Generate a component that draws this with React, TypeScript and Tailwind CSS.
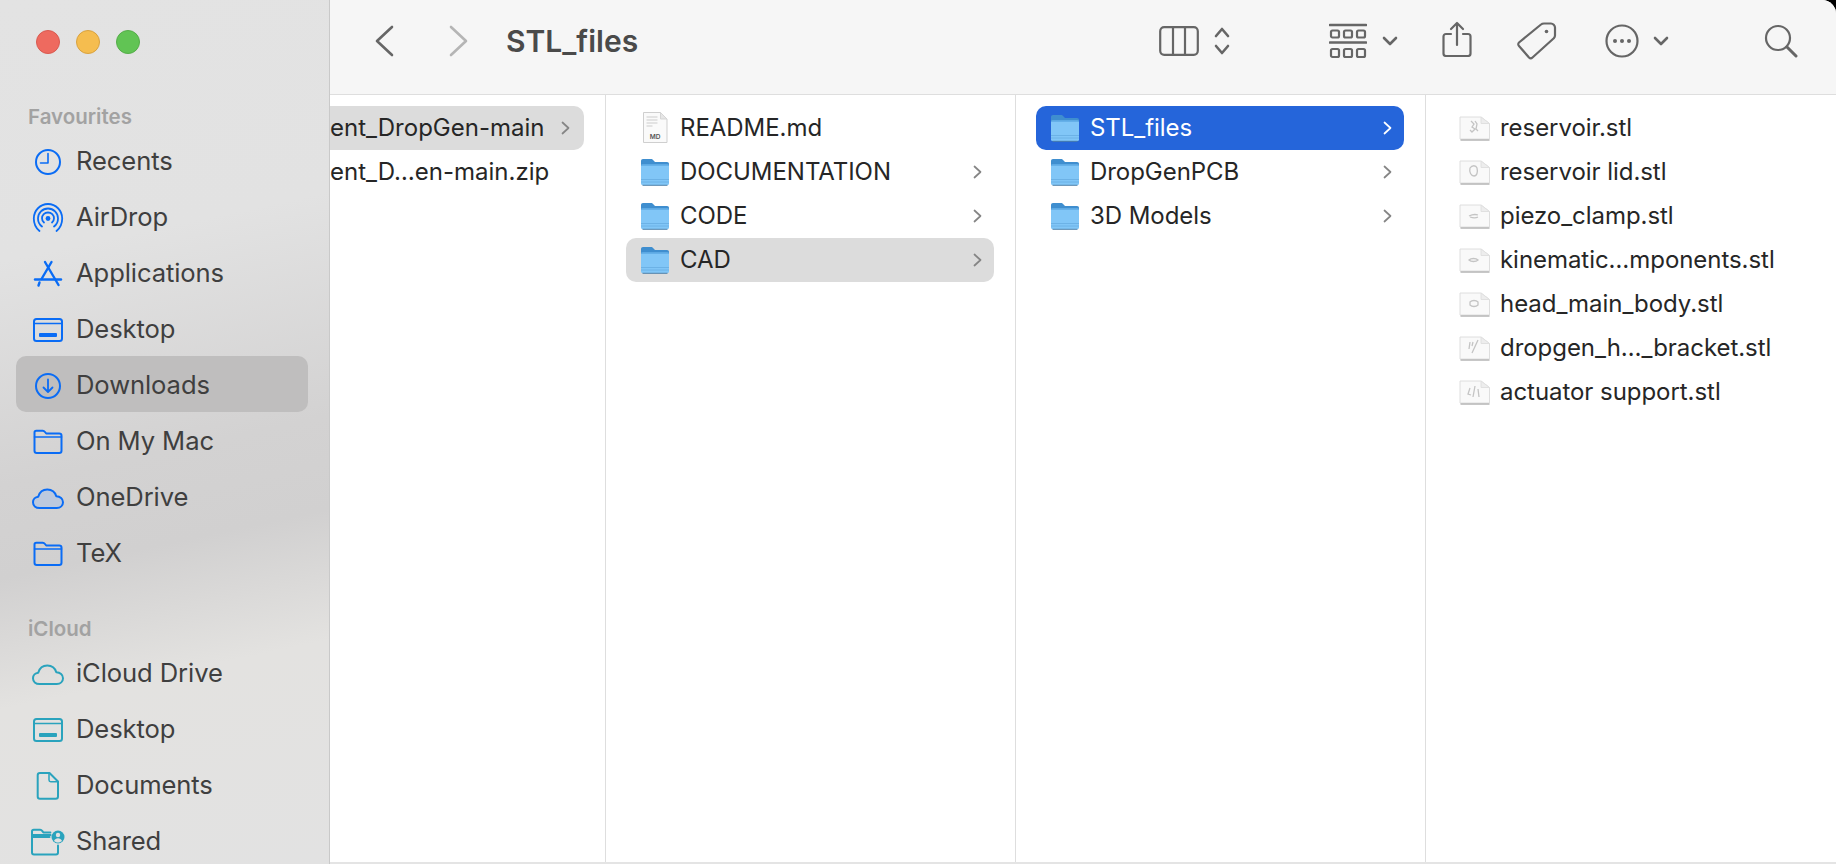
import type { ReactNode } from "react";

const BLUE = "#0a6cf5";
const TEAL = "#2aa3bd";

function SideIcon({ children }: { children: ReactNode }) {
  return (
    <svg width="36" height="36" viewBox="0 0 36 36" fill="none" strokeWidth="2" strokeLinecap="round" strokeLinejoin="round" className="shrink-0">
      {children}
    </svg>
  );
}

function ClockIcon() {
  return (
    <SideIcon>
      <g stroke={BLUE}>
        <circle cx="18" cy="18" r="12" />
        <path d="M18 9.500V19H10.500" strokeWidth="1.600" />
      </g>
    </SideIcon>
  );
}

function AirDropIcon() {
  return (
    <SideIcon>
      <g stroke={BLUE} strokeWidth="1.800">
        <path d="M9.500 31C5.800 28 3.800 23.500 3.800 18.500 3.800 10.500 10.200 4 18 4s14.200 6.500 14.200 14.500c0 5-2 9.500-5.700 12.500" />
        <path d="M12 26.500C9.500 24.700 8 21.800 8 18.500 8 12.900 12.500 8.500 18 8.500s10 4.400 10 10c0 3.300-1.500 6.200-4 8" />
        <path d="M14 22.500c-1.300-1-2-2.500-2-4.200 0-3.300 2.700-5.800 6-5.800s6 2.500 6 5.800c0 1.700-.7 3.200-2 4.200" />
      </g>
      <circle cx="18" cy="18.500" r="2.400" fill={BLUE} />
    </SideIcon>
  );
}

function AppsIcon() {
  return (
    <SideIcon>
      <g stroke={BLUE} strokeWidth="2.400">
        <path d="M15 6l13.500 23" />
        <path d="M21.500 6L11.500 23" />
        <path d="M5 23.500h26" />
        <path d="M9.500 26.500l-1 3" />
      </g>
    </SideIcon>
  );
}

function DesktopIcon({ color }: { color: string }) {
  return (
    <SideIcon>
      <rect x="4" y="7" width="28" height="22" rx="2.500" stroke={color} />
      <path d="M4 11.500h28" stroke={color} strokeWidth="1.500" />
      <rect x="9" y="21" width="18" height="4" rx="1" fill={color} />
    </SideIcon>
  );
}

function DownloadIcon() {
  return (
    <SideIcon>
      <g stroke={BLUE}>
        <circle cx="18" cy="18" r="12" />
        <path d="M18 11.500v12M13.500 19.500l4.500 4.500 4.500-4.500" strokeWidth="1.800" />
      </g>
    </SideIcon>
  );
}

function FolderLine({ color }: { color: string }) {
  return (
    <SideIcon>
      <path d="M4.500 8.500c0-1 .7-1.800 1.800-1.800h6.500c1 0 1.500.4 2.200 1.300l1.200 1.500h13c1.300 0 2.300 1 2.300 2.200v15c0 1.300-1 2.300-2.300 2.300H6.800c-1.300 0-2.300-1-2.300-2.300z" stroke={color} />
      <path d="M4.500 13h27" stroke={color} strokeWidth="1.500" />
    </SideIcon>
  );
}

function CloudIcon({ color, fill }: { color: string; fill?: boolean }) {
  const outline =
    "M9.500 28C5.700 28 3 25.600 3 22.300c0-3 2.300-5.300 5.200-5.600C9.500 12.300 13 9.500 17.300 9.500c4.300 0 7.800 2.700 9 6.800 3.900.1 6.700 2.700 6.700 6 0 3.300-2.600 5.700-6.200 5.700z";
  return (
    <SideIcon>
      {fill && <path d={outline} fill="#bcc9de" />}
      <path d={outline} stroke={color} />
    </SideIcon>
  );
}

function DocLineIcon() {
  return (
    <SideIcon>
      <path d="M10 5.500h9.500L28 14v15c0 1.300-1 2.300-2.300 2.300H10c-1.300 0-2.300-1-2.300-2.300V7.800C7.700 6.500 8.700 5.500 10 5.500z" stroke={TEAL} transform="translate(0 -.5)" />
      <path d="M19 5v7c0 1 .7 1.700 1.700 1.700H28" stroke={TEAL} strokeWidth="1.500" />
    </SideIcon>
  );
}

function SharedIcon() {
  return (
    <SideIcon>
      <path d="M21 11.500H2.500V29c0 1.300.8 2 2 2h22c1.200 0 2-.8 2-2v-7M2.500 11.500V8c0-1 .7-1.700 1.700-1.700h6.500c1 0 1.500.4 2.200 1.300l1 1.400h7M2.500 13.500H20" stroke={TEAL} transform="translate(-.5 -.5)" />
      <circle cx="28" cy="13" r="6.500" fill={TEAL} />
      <circle cx="28" cy="11" r="2.200" fill="#e1e1e1" />
      <path d="M24 17c.8-2 2.300-2.800 4-2.800s3.200.8 4 2.800c-1 .9-2.400 1.500-4 1.500S25 17.900 24 17z" fill="#e1e1e1" />
    </SideIcon>
  );
}

function SideRow({ icon, label, active }: { icon: ReactNode; label: string; active?: boolean }) {
  return (
    <div className={`flex h-14 shrink-0 items-center gap-[10px] rounded-[10px] pt-[3px] pl-3.5 ${active ? "bg-[#bfbebe]" : ""}`}>
      {icon}
      <span className="text-[25.600px] tracking-[-0.1px] text-[#3f3f3f]">{label}</span>
    </div>
  );
}

function SideHeading({ children, className }: { children: string; className: string }) {
  return <div className={`pl-3 text-[20.500px] leading-[31px] font-semibold text-[#a2a2a2] ${className}`}>{children}</div>;
}

function Sidebar() {
  return (
    <aside className="flex h-full w-[330px] shrink-0 flex-col overflow-hidden border-r border-[#c9c9c9] bg-[linear-gradient(168deg,#e3e3e3_0%,#e2e2e2_28%,#d3d2d2_52%,#d1d0d0_62%,#e3e2e0_76%,#e2e2e2_100%)] pr-[21px] pl-4">
      <div className="flex h-[84px] shrink-0 items-center gap-4 pl-5">
        <span className="size-6 rounded-full border border-[#d95a50] bg-[#ee6a5f]" />
        <span className="size-6 rounded-full border border-[#d9a23f] bg-[#f5bd4f]" />
        <span className="size-6 rounded-full border border-[#55ad49] bg-[#61c454]" />
      </div>
      <SideHeading className="mt-[17px] shrink-0">Favourites</SideHeading>
      <SideRow icon={<ClockIcon />} label="Recents" />
      <SideRow icon={<AirDropIcon />} label="AirDrop" />
      <SideRow icon={<AppsIcon />} label="Applications" />
      <SideRow icon={<DesktopIcon color={BLUE} />} label="Desktop" />
      <SideRow icon={<DownloadIcon />} label="Downloads" active />
      <SideRow icon={<FolderLine color={BLUE} />} label="On My Mac" />
      <SideRow icon={<CloudIcon color={BLUE} fill />} label="OneDrive" />
      <SideRow icon={<FolderLine color={BLUE} />} label="TeX" />
      <SideHeading className="mt-[33px] shrink-0">iCloud</SideHeading>
      <SideRow icon={<CloudIcon color={TEAL} />} label="iCloud Drive" />
      <SideRow icon={<DesktopIcon color={TEAL} />} label="Desktop" />
      <SideRow icon={<DocLineIcon />} label="Documents" />
      <SideRow icon={<SharedIcon />} label="Shared" />
    </aside>
  );
}

function ToolSvg({ w, h, children, className }: { w: number; h: number; children: ReactNode; className?: string }) {
  return (
    <svg width={w} height={h} viewBox={`0 0 ${w} ${h}`} fill="none" stroke="#666" strokeWidth="2.200" strokeLinecap="round" strokeLinejoin="round" className={`shrink-0 ${className ?? ""}`}>
      {children}
    </svg>
  );
}

function SmallChevronDown({ className }: { className: string }) {
  return (
    <ToolSvg w={16} h={10} className={className}>
      <path d="M2 2l6 6 6-6" strokeWidth="2.600" />
    </ToolSvg>
  );
}

function Toolbar() {
  return (
    <header className="flex h-[95px] shrink-0 items-center border-b border-[#dedede] bg-[#f6f6f6] pb-[13px]">
      <ToolSvg w={20} h={32} className="ml-[44px]">
        <path d="M18 2L3 16l15 14" stroke="#666" strokeWidth="2.600" />
      </ToolSvg>
      <ToolSvg w={20} h={32} className="ml-[55px]">
        <path d="M2 2l15 14L2 30" stroke="#b5b5b5" strokeWidth="2.600" />
      </ToolSvg>
      <h1 className="mt-[2px] ml-[37px] text-[30px] font-semibold text-[#4a4a4a]">STL_files</h1>

      <ToolSvg w={40} h={30} className="ml-[521px]">
        <rect x="1.200" y="1.200" width="37.600" height="27.600" rx="4" />
        <path d="M14 1.500v27M26 1.500v27" />
      </ToolSvg>
      <ToolSvg w={16} h={32} className="ml-[15px]">
        <path d="M2 11l6-7 6 7M2 21l6 7 6-7" strokeWidth="2.600" />
      </ToolSvg>

      <ToolSvg w={38} h={36} className="ml-[99px]">
        <path d="M1 2h36M1 19.500h36" strokeWidth="2.600" />
        <rect x="2" y="7.500" width="8" height="7" rx="1.500" />
        <rect x="15" y="7.500" width="8" height="7" rx="1.500" />
        <rect x="28" y="7.500" width="8" height="7" rx="1.500" />
        <rect x="2" y="26" width="8" height="8" rx="1.500" />
        <rect x="15" y="26" width="8" height="8" rx="1.500" />
        <rect x="28" y="26" width="8" height="8" rx="1.500" />
      </ToolSvg>
      <SmallChevronDown className="ml-[15px]" />

      <ToolSvg w={30} h={36} className="mb-1 ml-11">
        <path d="M9 13H4c-1.500 0-2.500 1-2.500 2.500v17c0 1.500 1 2.500 2.500 2.500h22c1.500 0 2.500-1 2.500-2.500v-17c0-1.500-1-2.500-2.500-2.500h-5" />
        <path d="M15 24V2M9 8l6-6 6 6" />
      </ToolSvg>

      <ToolSvg w={40} h={38} className="ml-[45px]">
        <path d="M27 1.500h7c2 0 4 2 4 4v8c0 1-.5 2-1.200 2.800L15.500 35.500c-1 1-2.500 1-3.500 0L2 24c-1-1-1-2.500 0-3.500L24 2.500c.8-.7 2-1 3-1z" />
        <circle cx="29.500" cy="9.500" r="1.800" fill="#666" stroke="none" />
      </ToolSvg>

      <ToolSvg w={34} h={34} className="ml-12">
        <circle cx="17" cy="17" r="15.500" />
        <circle cx="10" cy="17" r="2" fill="#666" stroke="none" />
        <circle cx="17" cy="17" r="2" fill="#666" stroke="none" />
        <circle cx="24" cy="17" r="2" fill="#666" stroke="none" />
      </ToolSvg>
      <SmallChevronDown className="ml-[14px]" />

      <ToolSvg w={34} h={34} className="ml-[95px]">
        <circle cx="14" cy="14" r="12" />
        <path d="M23 23l9 9" strokeWidth="3" />
      </ToolSvg>
    </header>
  );
}

function FolderIcon() {
  return (
    <svg width="30" height="28" viewBox="0 0 30 28" className="shrink-0">
      <path d="M1 3c0-1.300.8-2 2-2h8c1 0 1.600.4 2.300 1.200L15 4h12c1.300 0 2 .8 2 2v4H1z" fill="#3f8ecf" />
      <rect x="1" y="6.500" width="28" height="20.500" rx="1.500" fill="#81c6f7" />
      <rect x="1" y="6.500" width="28" height="1.200" fill="#5aa7e3" />
      <path d="M1 21.500h28M1 24h28" stroke="#6cb2e6" strokeWidth="1" />
      <path d="M2.500 27.300h25" stroke="#4b80ab" strokeWidth="1" />
    </svg>
  );
}

function ReadmeIcon() {
  return (
    <svg width="30" height="34" viewBox="0 0 30 34" className="shrink-0">
      <path d="M3.500 1.500h17L27 8v23.500H3.500z" fill="#fafafa" stroke="#cfcfcf" />
      <path d="M20.500 1.500V8H27z" fill="#e6e6e6" stroke="#d5d5d5" />
      <path d="M6.500 6h11M6.500 9h11M6.500 12h11M6.500 15h6" stroke="#dcdcdc" strokeWidth="1.500" />
      <text x="15" y="27.500" textAnchor="middle" fontSize="6.500" fontFamily="Inter, sans-serif" fontWeight="600" fill="#555">MD</text>
    </svg>
  );
}

const stlGlyphs = [
  "M12 5l3 3-2 3 3 2-3 3-2-2M16 5l2 3-1 5 2 2",
  "M11 8c2-3 6-3 7 0 1 4 0 8-3 8-3 0-5-4-4-8z",
  "M10 12c2-1 6-2 9-1M11 13c3 1 6 1 8 0",
  "M10 12c2-2 7-2 9 0-2 2-7 2-9 0z",
  "M11 10c2-2 6-2 8 0v3c-2 2-6 2-8 0z",
  "M11 6l-1 7M14 6l-1 4M19 4l-6 13",
  "M11 8l-2 6 3 1M16 6l-2 11M19 9l1 8",
];

function StlIcon({ index }: { index: number }) {
  return (
    <svg width="32" height="25" viewBox="0 0 32 25" className="shrink-0">
      <path d="M1 1h21l8.500 6.500V23H1z" fill="#f9f9f9" stroke="#dedede" />
      <path d="M22 1v6.500h8.500z" fill="#ededed" stroke="#e0e0e0" />
      <path d="M1.500 24h29" stroke="#b5b5b5" strokeWidth="1.500" />
      <path d={stlGlyphs[index]} fill="none" stroke="#c4c4c4" strokeWidth="1.300" />
    </svg>
  );
}

function Chevron({ color }: { color: string }) {
  return (
    <svg width="9" height="14" viewBox="0 0 9 14" fill="none" className="shrink-0">
      <path d="M1.500 1.500l6 5.500-6 5.500" stroke={color} strokeWidth="1.700" strokeLinecap="round" strokeLinejoin="round" />
    </svg>
  );
}

type RowProps = {
  icon: ReactNode;
  label: string;
  chevron?: boolean;
  state?: "selected" | "active";
};

function FileRow({ icon, label, chevron, state }: RowProps) {
  const bg = state === "selected" ? "bg-[#dcdcdc]" : state === "active" ? "bg-[#2565da]" : "";
  const text = state === "active" ? "text-white" : "text-[#262626]";
  return (
    <div className={`flex h-11 items-center rounded-[10px] pl-3.5 ${bg}`}>
      <span className="flex w-[30px] shrink-0 justify-center">{icon}</span>
      <span className={`ml-2 min-w-0 flex-1 pl-[2px] text-[24px] tracking-[-0.05px] whitespace-nowrap ${text}`}>{label}</span>
      {chevron && (
        <span className="pr-3">
          <Chevron color={state === "active" ? "#ffffff" : "#858585"} />
        </span>
      )}
    </div>
  );
}

const stlFiles = [
  "reservoir.stl",
  "reservoir lid.stl",
  "piezo_clamp.stl",
  "kinematic…mponents.stl",
  "head_main_body.stl",
  "dropgen_h…_bracket.stl",
  "actuator support.stl",
];

function Browser() {
  return (
    <div className="flex min-h-0 flex-1 bg-white">
      <div className="w-[276px] shrink-0 border-r border-[#dedede] pt-[11px] pr-[21px]">
        <div className="flex h-11 items-center justify-between rounded-r-[10px] bg-[#dcdcdc] pr-3.5">
          <span className="text-[24px] whitespace-nowrap text-[#262626]">ent_DropGen-main</span>
          <Chevron color="#858585" />
        </div>
        <div className="flex h-11 items-center text-[24px] whitespace-nowrap text-[#262626]">ent_D…en-main.zip</div>
      </div>
      <div className="w-[410px] shrink-0 border-r border-[#dedede] pt-[11px] pr-[21px] pl-5">
        <FileRow icon={<ReadmeIcon />} label="README.md" />
        <FileRow icon={<FolderIcon />} label="DOCUMENTATION" chevron />
        <FileRow icon={<FolderIcon />} label="CODE" chevron />
        <FileRow icon={<FolderIcon />} label="CAD" chevron state="selected" />
      </div>
      <div className="w-[410px] shrink-0 border-r border-[#dedede] pt-[11px] pr-[21px] pl-5">
        <FileRow icon={<FolderIcon />} label="STL_files" chevron state="active" />
        <FileRow icon={<FolderIcon />} label="DropGenPCB" chevron />
        <FileRow icon={<FolderIcon />} label="3D Models" chevron />
      </div>
      <div className="min-w-0 flex-1 px-5 pt-[11px]">
        {stlFiles.map((name, i) => (
          <FileRow key={name} icon={<StlIcon index={i} />} label={name} />
        ))}
      </div>
    </div>
  );
}

export default function App() {
  return (
    <div className="flex h-[864px] w-[1836px] overflow-hidden bg-black font-['Inter',sans-serif]">
      <Sidebar />
      <main className="flex min-w-0 flex-1 flex-col overflow-hidden rounded-tr-[14px] border-b-2 border-[#e4e4e4] bg-white">
        <Toolbar />
        <Browser />
      </main>
    </div>
  );
}
